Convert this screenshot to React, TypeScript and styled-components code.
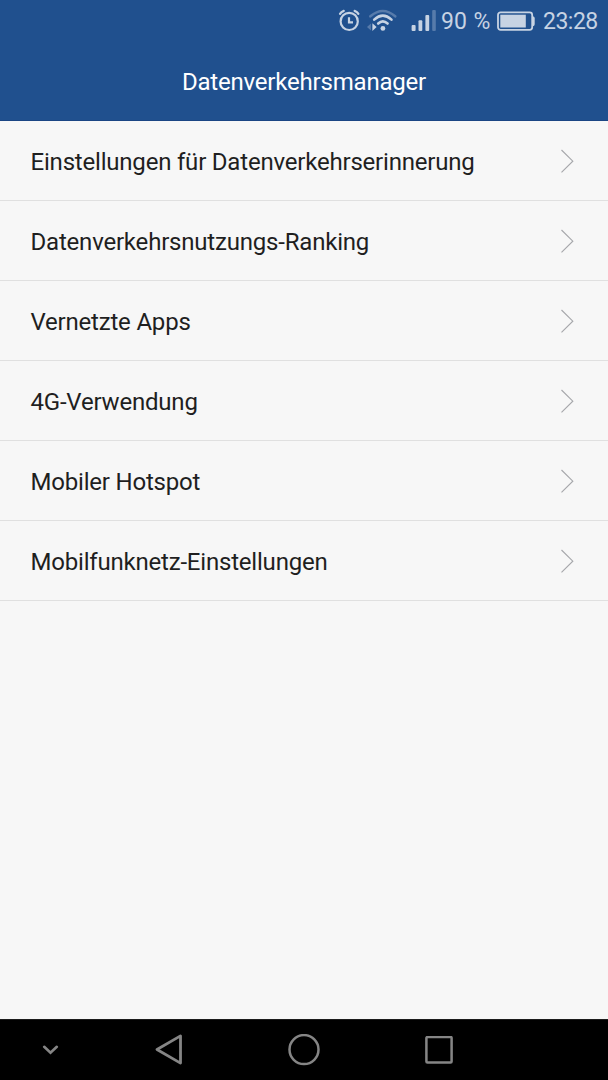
import React from "react";
import styled, { createGlobalStyle } from "styled-components";

const GlobalStyle = createGlobalStyle`
  *, *::before, *::after { box-sizing: border-box; }
  body { margin: 0; background: #f7f7f7; font-family: Roboto, "Noto Sans", sans-serif; }
  svg { display: block; flex: none; }
`;

const Screen = styled.div`
  display: flex;
  flex-direction: column;
  width: 608px;
  height: 1080px;
  overflow: hidden;
  background: #f7f7f7;
`;

const Header = styled.header`
  flex: none;
  height: 121px;
  background: #20508e;
  border-bottom: 1px solid #1b4684;
`;

const StatusBar = styled.div`
  display: flex;
  align-items: center;
  justify-content: flex-end;
  height: 42px;
  padding-right: 10px;
  color: #c7d3e3;
`;

const StatusText = styled.span<{ $width: number; $spacing?: number }>`
  width: ${(p) => p.$width}px;
  padding-top: 2px;
  font-size: 23px;
  line-height: 42px;
  letter-spacing: ${(p) => p.$spacing ?? 0}px;
  word-spacing: 1px;
  white-space: nowrap;
`;

const IconSlot = styled.span<{ $gap: number }>`
  margin-right: ${(p) => p.$gap}px;
`;

const Title = styled.h1`
  margin: 0;
  font-size: 24px;
  font-weight: 400;
  line-height: 80px;
  letter-spacing: -0.2px;
  text-align: center;
  color: #fff;
`;

const List = styled.ul`
  flex: 1;
  margin: 0;
  padding: 0;
  list-style: none;
`;

const Row = styled.li`
  display: flex;
  align-items: center;
  justify-content: space-between;
  height: 80px;
  padding: 0 34px 0 30.5px;
  border-bottom: 1px solid #e0e0e0;
`;

const Label = styled.span`
  font-size: 24px;
  line-height: 30px;
  letter-spacing: -0.2px;
  padding-top: 2px;
  color: #1f1f1f;
`;

const NavBar = styled.nav`
  flex: none;
  display: grid;
  grid-template-columns: 101px 136px 134px 136px 1fr;
  place-items: center;
  height: 61px;
  background: #000;
  border-top: 1px solid #1c1c1c;
`;

const AlarmIcon = () => (
  <svg width="22" height="24" viewBox="0 0 22 24" fill="none" stroke="currentColor" strokeWidth="2.2" strokeLinecap="round">
    <circle cx="11.2" cy="12.4" r="8.6" />
    <path d="M11 8.3v5h4" strokeLinecap="butt" />
    <path d="M2 4.9Q3.2 2.9 5.8 1.9M20.4 4.9Q19.2 2.9 16.6 1.9" />
  </svg>
);

const WifiIcon = () => (
  <svg width="31" height="24" viewBox="0 0 31 24" fill="none" strokeWidth="2.6" strokeLinecap="round">
    <path d="M3.4 7.3Q15.8 -3.3 28.2 7.3" stroke="#577bab" />
    <path d="M7.2 10.6Q15.8 2.8 24.5 10.6M11.2 14.5Q15.8 10.2 20.6 14.5" stroke="currentColor" />
    <circle cx="15.9" cy="19.4" r="2.4" fill="currentColor" />
    <path d="M3.9 14.6v7L0 18.1z" fill="#577bab" />
    <path d="M5.4 14.2v7.8L9.6 18.1z" fill="currentColor" />
  </svg>
);

const SignalIcon = () => (
  <svg width="25" height="24" viewBox="0 0 25 24" fill="currentColor">
    <rect x="0.6" y="16" width="4" height="6" rx="1" />
    <rect x="7.5" y="11.2" width="3.8" height="10.8" rx="1" />
    <rect x="14.4" y="6" width="3.8" height="16" rx="1" />
    <rect x="21.2" y="1" width="3.6" height="21" rx="1" fill="#577bab" />
  </svg>
);

const BatteryIcon = () => (
  <svg width="38" height="20" viewBox="0 0 38 20">
    <rect x="1" y="1.4" width="34.2" height="17.4" rx="2.5" fill="none" stroke="currentColor" strokeWidth="1.8" />
    <rect x="3.3" y="3.7" width="25.5" height="12.8" fill="currentColor" />
    <path d="M36 5.4h.7q1 .6 1 2v5.5q0 1.4-1 2H36z" fill="currentColor" />
  </svg>
);

const Chevron = () => (
  <svg width="14" height="24" viewBox="0 0 14 24" fill="none" stroke="#a6a7ab" strokeWidth="1.15">
    <path d="M1.5 1L12.8 12.2L1.5 23.3" />
  </svg>
);

const HideIcon = () => (
  <svg width="17" height="10" viewBox="0 0 17 10" fill="none" stroke="#858585" strokeWidth="2.6" strokeLinecap="round">
    <path d="M2.2 1.8L8.5 7.8L14.8 1.8" />
  </svg>
);

const BackIcon = () => (
  <svg width="28" height="32" viewBox="0 0 28 32" fill="none" stroke="#858585" strokeWidth="2.8" strokeLinejoin="round">
    <path d="M25.5 1.9V29.1L2 15.5z" />
  </svg>
);

const HomeIcon = () => (
  <svg width="32" height="32" viewBox="0 0 32 32" fill="none" stroke="#858585" strokeWidth="2.5">
    <circle cx="16" cy="15.6" r="14.5" />
  </svg>
);

const RecentIcon = () => (
  <svg width="28" height="28" viewBox="0 0 28 28" fill="none" stroke="#858585" strokeWidth="2.5">
    <rect x="1.4" y="1" width="25.2" height="25.4" rx="1" />
  </svg>
);

const items = [
  "Einstellungen für Datenverkehrserinnerung",
  "Datenverkehrsnutzungs-Ranking",
  "Vernetzte Apps",
  "4G-Verwendung",
  "Mobiler Hotspot",
  "Mobilfunknetz-Einstellungen",
];

export default function App() {
  return (
    <>
      <GlobalStyle />
      <Screen>
        <Header>
          <StatusBar>
            <IconSlot $gap={7}><AlarmIcon /></IconSlot>
            <IconSlot $gap={13}><WifiIcon /></IconSlot>
            <IconSlot $gap={5}><SignalIcon /></IconSlot>
            <StatusText $width={56}>90 %</StatusText>
            <IconSlot $gap={8}><BatteryIcon /></IconSlot>
            <StatusText $width={55} $spacing={-0.5}>23:28</StatusText>
          </StatusBar>
          <Title>Datenverkehrsmanager</Title>
        </Header>
        <List>
          {items.map((item) => (
            <Row key={item}>
              <Label>{item}</Label>
              <Chevron />
            </Row>
          ))}
        </List>
        <NavBar>
          <HideIcon />
          <BackIcon />
          <HomeIcon />
          <RecentIcon />
        </NavBar>
      </Screen>
    </>
  );
}
